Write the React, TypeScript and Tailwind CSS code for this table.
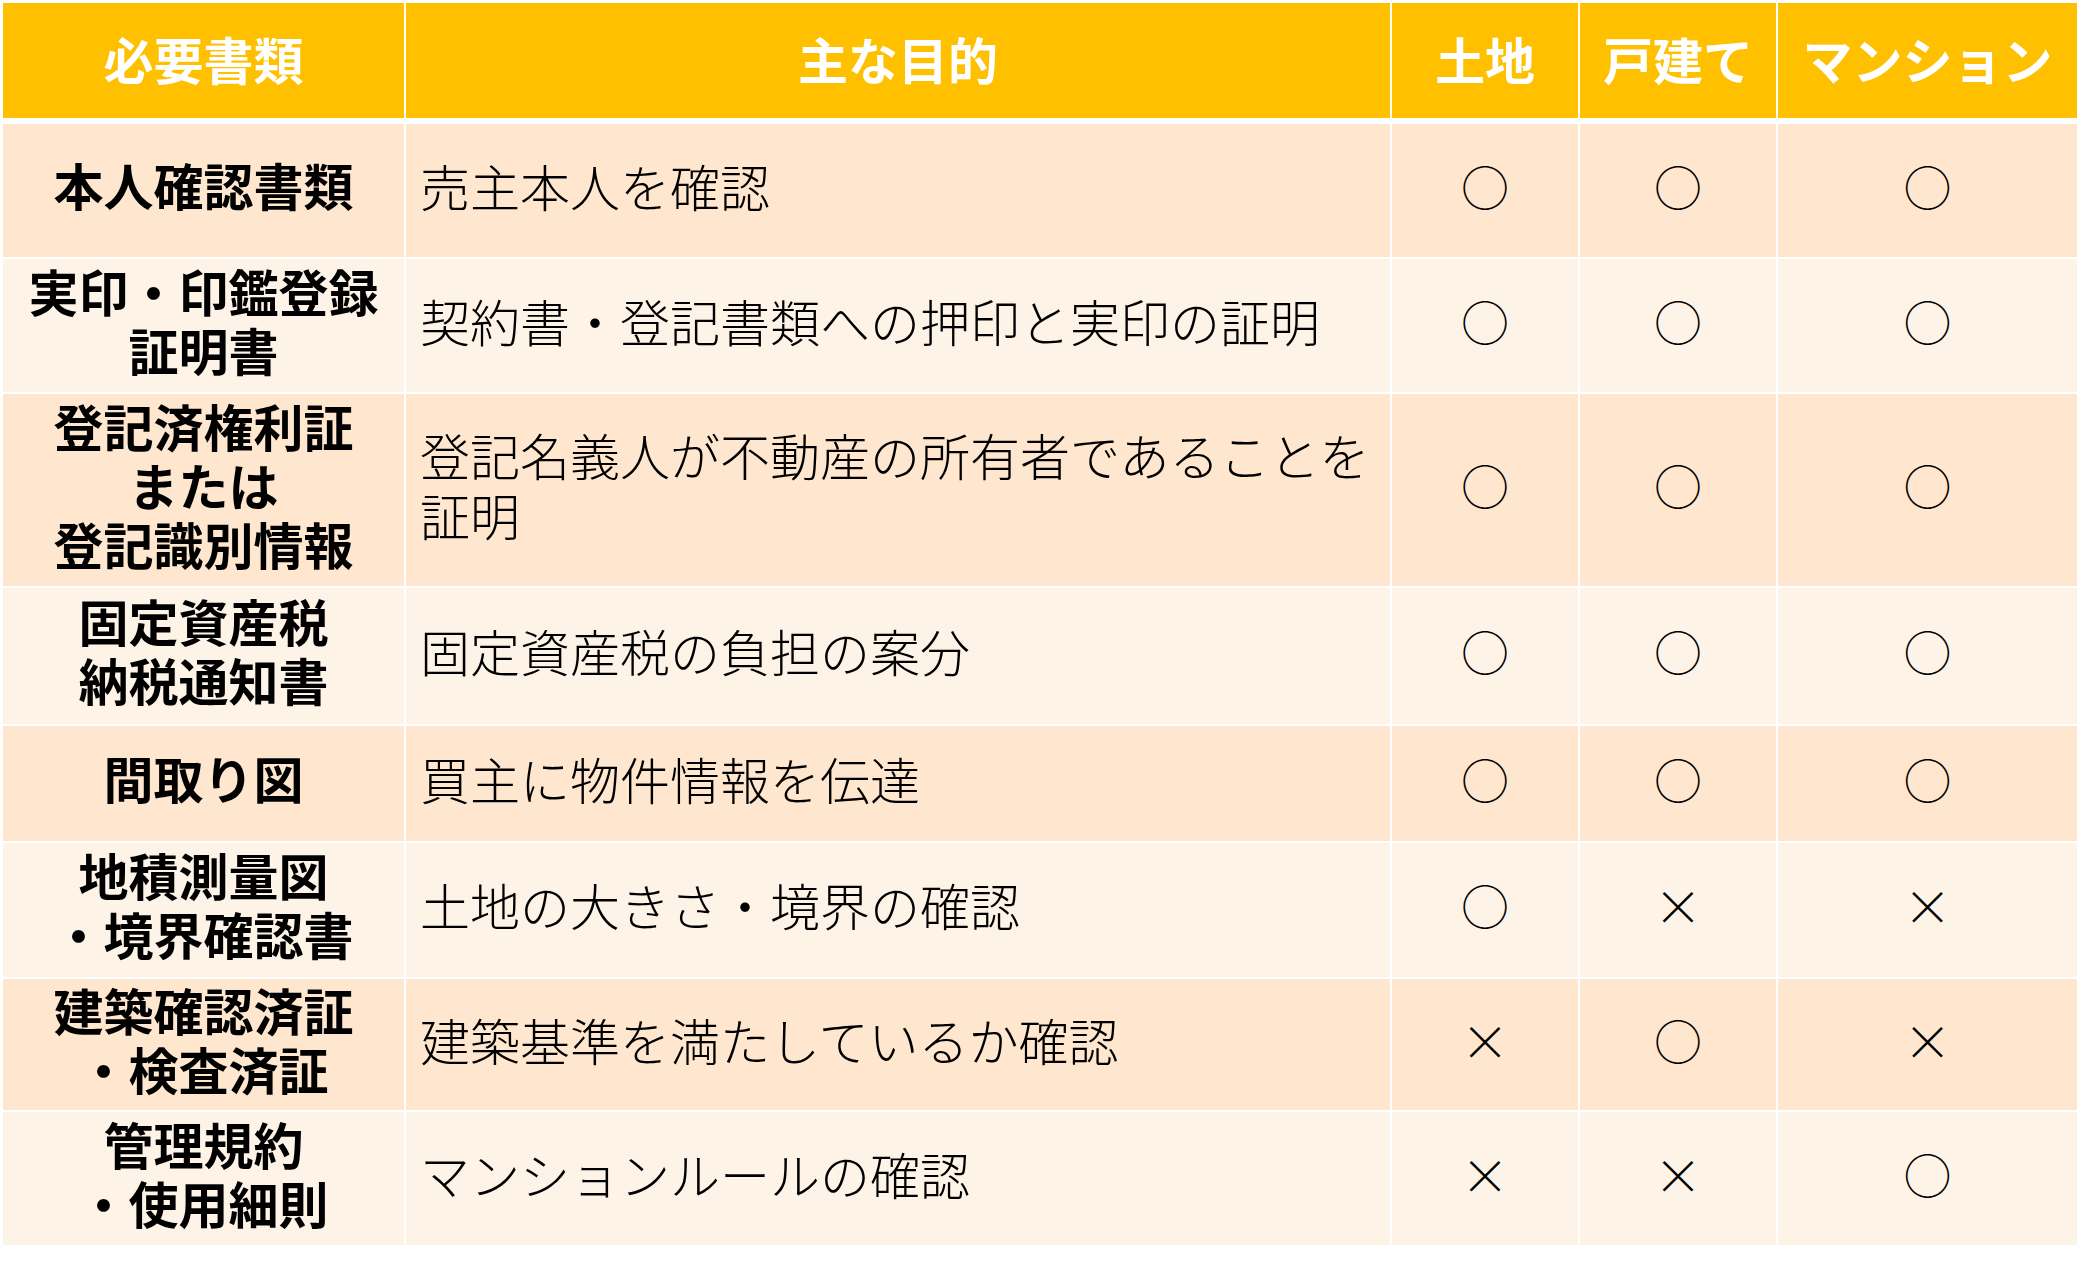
const COLS = "grid grid-cols-[401px_984px_186px_196px_299px] gap-x-[2px]";

type Mark = "o" | "x";

const ROWS: { name: string[]; purpose: string[]; h: string; marks: Mark[] }[] = [
  { name: ["本人確認書類"], purpose: ["売主本人を確認"], h: "h-[133px]", marks: ["o", "o", "o"] },
  { name: ["実印・印鑑登録", "証明書"], purpose: ["契約書・登記書類への押印と実印の証明"], h: "h-[133px]", marks: ["o", "o", "o"] },
  {
    name: ["登記済権利証", "または", "登記識別情報"],
    purpose: ["登記名義人が不動産の所有者であることを", "証明"],
    h: "h-[192px]",
    marks: ["o", "o", "o"],
  },
  { name: ["固定資産税", "納税通知書"], purpose: ["固定資産税の負担の案分"], h: "h-[136px]", marks: ["o", "o", "o"] },
  { name: ["間取り図"], purpose: ["買主に物件情報を伝達"], h: "h-[115px]", marks: ["o", "o", "o"] },
  { name: ["地積測量図", "・境界確認書"], purpose: ["土地の大きさ・境界の確認"], h: "h-[134px]", marks: ["o", "x", "x"] },
  { name: ["建築確認済証", "・検査済証"], purpose: ["建築基準を満たしているか確認"], h: "h-[131px]", marks: ["x", "o", "x"] },
  { name: ["管理規約", "・使用細則"], purpose: ["マンションルールの確認"], h: "h-[133px]", marks: ["x", "x", "o"] },
];

const HEADERS = ["必要書類", "主な目的", "土地", "戸建て", "マンション"];

function MarkCell({ mark, bg }: { mark: Mark; bg: string }) {
  return (
    <div className={`${bg} flex items-center justify-center pb-[12px]`}>
      <span className="text-[48px] font-light leading-none">{mark === "o" ? "○" : "×"}</span>
    </div>
  );
}

export default function App() {
  return (
    <div
      className="min-h-screen bg-white pl-[3px] pt-[3px] text-black"
      style={{ fontFamily: '"Noto Sans CJK JP", "Noto Sans", sans-serif' }}
    >
      <div className={`${COLS} h-[115px]`}>
        {HEADERS.map((h) => (
          <div
            key={h}
            className="bg-[#ffc000] flex items-center justify-center pb-[5px] text-white font-bold text-[50px] whitespace-nowrap"
          >
            {h}
          </div>
        ))}
      </div>

      <div className="mt-[6px] flex flex-col gap-y-[2px]">
        {ROWS.map((row, i) => {
          const bg = i % 2 === 0 ? "bg-[#fee7ce]" : "bg-[#fef3e7]";
          return (
            <div key={i} className={`${COLS} ${row.h}`}>
              <div className={`${bg} flex flex-col items-center justify-center pb-[12px] font-bold text-[50px] leading-[59px] text-center whitespace-nowrap`}>
                {row.name.map((l) => (
                  <span key={l}>{l}</span>
                ))}
              </div>
              <div className={`${bg} flex flex-col justify-center pl-[14px] pb-[12px] font-light text-[50px] leading-[60px] whitespace-nowrap`}>
                {row.purpose.map((l) => (
                  <span key={l}>{l}</span>
                ))}
              </div>
              {row.marks.map((m, j) => (
                <MarkCell key={j} mark={m} bg={bg} />
              ))}
            </div>
          );
        })}
      </div>
    </div>
  );
}
